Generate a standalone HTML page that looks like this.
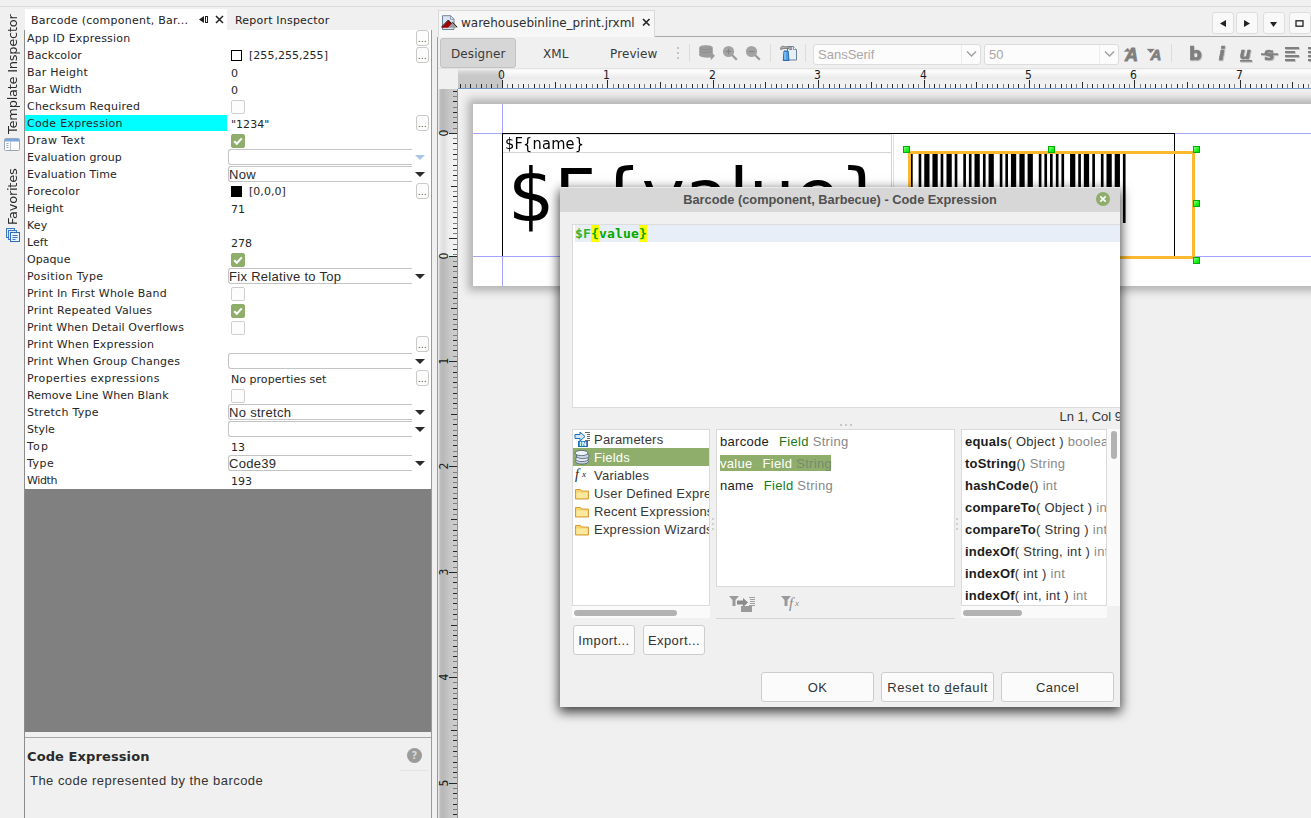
<!DOCTYPE html>
<html lang="en"><head><meta charset="utf-8"><title>Barcode (component, Barbecue) - Code Expression</title>
<style>
*{box-sizing:border-box;margin:0;padding:0}
html,body{width:1311px;height:818px;overflow:hidden;background:#f0f0f0}
body{position:relative;font-family:"DejaVu Sans","Liberation Sans",sans-serif;font-size:11px;color:#222}
.a{position:absolute}
.t{position:absolute;white-space:nowrap;line-height:1}
.u{font-family:"Liberation Sans",sans-serif}
.vt{position:absolute;writing-mode:vertical-rl;transform:rotate(180deg);white-space:nowrap;font-size:13px;line-height:1;color:#2a2a2a}
.lbl{position:absolute;left:27px;font-size:11px;letter-spacing:.2px;line-height:17px;height:17px;white-space:nowrap;color:#262626}
.val{position:absolute;left:231px;font-size:11px;letter-spacing:.03px;line-height:17px;height:17px;white-space:nowrap;color:#262626}
.dots{position:absolute;left:416px;width:13px;height:16px;border:1px solid #c9c9c9;border-radius:3px;background:#fcfcfc;font-size:8px;line-height:17px;text-align:center;color:#333;letter-spacing:.4px;overflow:hidden}
.cb{position:absolute;left:231px;width:14px;height:14px;border:1px solid #cfcfcf;border-radius:2px;background:#fdfdfd}
.cb.on{background:#8fae6c;border-color:#8fae6c}
.combo{position:absolute;left:228px;width:184px;height:16px;border:1px solid #c4c4c4;border-right:none;border-radius:3px 0 0 3px;background:#fff;font-family:"Liberation Sans",sans-serif;font-size:13px;letter-spacing:.3px;line-height:15px;padding-left:0;color:#2a2a2a;white-space:nowrap}
.arr{position:absolute;left:415px;width:0;height:0;border-left:5px solid transparent;border-right:5px solid transparent;border-top:5px solid #2b2b2b}
.sw{position:absolute;left:231px;width:11px;height:11px;border:1px solid #000}
.btn{position:absolute;border:1px solid #cdcdcd;border-radius:3px;background:#fbfbfb;font-family:"Liberation Sans",sans-serif;font-size:13px;letter-spacing:.4px;color:#333;text-align:center;white-space:nowrap}
.row{position:absolute;white-space:nowrap;font-family:"Liberation Sans",sans-serif;font-size:13px;letter-spacing:.3px;line-height:18px;color:#383838}
</style></head><body>
<div class="a" style="left:0;top:6px;width:1311px;height:1px;background:#dadada"></div>
<div class="vt" style="left:6px;top:14px;height:120px;letter-spacing:-.25px">Template Inspector</div>
<svg class="a" style="left:4px;top:138px" width="16" height="13" viewBox="0 0 16 13"><rect x=".5" y=".5" width="15" height="12" rx="1" fill="#fdfdfd" stroke="#9aa7b8"/><rect x="1" y="1" width="14" height="2.5" fill="#7aa7de"/><line x1="6.5" y1="3.5" x2="6.5" y2="12" stroke="#b8c0cc"/><path d="M2.5 5.5h2M2.5 7.5h2M2.5 9.5h2" stroke="#9aa" stroke-width="1"/></svg>
<div class="vt" style="left:6px;top:168px;height:57px;letter-spacing:-.25px">Favorites</div>
<svg class="a" style="left:6px;top:228px" width="14" height="14" viewBox="0 0 14 14"><rect x=".5" y=".5" width="8" height="9" fill="#dbe8f8" stroke="#3d79c4"/><rect x="2.5" y="2.5" width="8" height="9" fill="#dbe8f8" stroke="#3d79c4"/><rect x="4.5" y="4.5" width="9" height="9" fill="#eaf2fc" stroke="#2f6cbc"/><path d="M6.5 7.5h5M6.5 9.5h5M6.5 11.5h3" stroke="#3d79c4"/></svg>
<div class="a" style="left:25px;top:9px;width:202px;height:21px;background:#fff"></div>
<div class="t" style="left:31px;top:15px;font-size:11px;letter-spacing:.26px;color:#222">Barcode (component, Bar...</div>
<svg class="a" style="left:198px;top:14px" width="12" height="11" viewBox="0 0 12 11"><path d="M1 5.5L6 2v7z" fill="#222"/><rect x="7.5" y="2.5" width="2" height="6" fill="none" stroke="#222"/></svg>
<svg class="a" style="left:215px;top:15px" width="9" height="9" viewBox="0 0 9 9"><path d="M1 1l7 7M8 1l-7 7" stroke="#222" stroke-width="1.5"/></svg>
<div class="t" style="left:235px;top:15px;font-size:11px;letter-spacing:.2px;color:#222">Report Inspector</div>
<div class="a" style="left:25px;top:30px;width:406px;height:459px;background:#fff"></div>
<div class="a" style="left:25px;top:489px;width:406px;height:243px;background:#808080"></div>
<div class="a" style="left:24px;top:30px;width:1px;height:788px;background:#8c8c8c"></div>
<div class="a" style="left:431px;top:30px;width:1px;height:788px;background:#9a9a9a"></div>
<div class="a" style="left:25px;top:737px;width:406px;height:1px;background:#a6a6a6"></div>
<div class="lbl" style="top:30px;letter-spacing:0.206px">App ID Expression</div>
<div class="dots" style="top:30px">...</div>
<div class="lbl" style="top:47px;letter-spacing:0.12px">Backcolor</div>
<div class="dots" style="top:47px">...</div>
<div class="sw" style="top:50px;background:#fff"></div>
<div class="val" style="left:249px;top:47px">[255,255,255]</div>
<div class="lbl" style="top:64px;letter-spacing:0.239px">Bar Height</div>
<div class="val" style="top:65px">0</div>
<div class="lbl" style="top:81px;letter-spacing:0.051px">Bar Width</div>
<div class="val" style="top:82px">0</div>
<div class="lbl" style="top:98px;letter-spacing:0.197px">Checksum Required</div>
<div class="cb" style="top:100px"></div>
<div class="a" style="left:25px;top:115px;width:202px;height:16px;background:#00ffff"></div>
<div class="lbl" style="top:115px;letter-spacing:0.297px">Code Expression</div>
<div class="dots" style="top:115px">...</div>
<div class="val" style="top:116px">&quot;1234&quot;</div>
<div class="lbl" style="top:132px;letter-spacing:0.412px">Draw Text</div>
<div class="cb on" style="top:134px"><svg width="12" height="12" viewBox="0 0 12 12" style="display:block"><path d="M2.2 6.2l2.6 2.6 5-5.4" fill="none" stroke="#fff" stroke-width="2.1"/></svg></div>
<div class="lbl" style="top:149px;letter-spacing:0.083px">Evaluation group</div>
<div class="combo" style="top:149px"></div>
<div class="arr" style="top:155px;border-top-color:#a9c6ea"></div>
<div class="lbl" style="top:166px;letter-spacing:0.095px">Evaluation Time</div>
<div class="combo" style="top:166px">Now</div>
<div class="arr" style="top:172px;border-top-color:#2b2b2b"></div>
<div class="lbl" style="top:183px;letter-spacing:0.252px">Forecolor</div>
<div class="dots" style="top:183px">...</div>
<div class="sw" style="top:186px;background:#000"></div>
<div class="val" style="left:249px;top:183px">[0,0,0]</div>
<div class="lbl" style="top:200px;letter-spacing:0.032px">Height</div>
<div class="val" style="top:201px">71</div>
<div class="lbl" style="top:217px;letter-spacing:0.17px">Key</div>
<div class="lbl" style="top:234px;letter-spacing:0.083px">Left</div>
<div class="val" style="top:235px">278</div>
<div class="lbl" style="top:251px;letter-spacing:0.058px">Opaque</div>
<div class="cb on" style="top:253px"><svg width="12" height="12" viewBox="0 0 12 12" style="display:block"><path d="M2.2 6.2l2.6 2.6 5-5.4" fill="none" stroke="#fff" stroke-width="2.1"/></svg></div>
<div class="lbl" style="top:268px;letter-spacing:0.371px">Position Type</div>
<div class="combo" style="top:268px">Fix Relative to Top</div>
<div class="arr" style="top:274px;border-top-color:#2b2b2b"></div>
<div class="lbl" style="top:285px;letter-spacing:0.181px">Print In First Whole Band</div>
<div class="cb" style="top:287px"></div>
<div class="lbl" style="top:302px;letter-spacing:0.217px">Print Repeated Values</div>
<div class="cb on" style="top:304px"><svg width="12" height="12" viewBox="0 0 12 12" style="display:block"><path d="M2.2 6.2l2.6 2.6 5-5.4" fill="none" stroke="#fff" stroke-width="2.1"/></svg></div>
<div class="lbl" style="top:319px;letter-spacing:0.086px">Print When Detail Overflows</div>
<div class="cb" style="top:321px"></div>
<div class="lbl" style="top:336px;letter-spacing:0.17px">Print When Expression</div>
<div class="dots" style="top:336px">...</div>
<div class="lbl" style="top:353px;letter-spacing:0.183px">Print When Group Changes</div>
<div class="combo" style="top:353px"></div>
<div class="arr" style="top:359px;border-top-color:#2b2b2b"></div>
<div class="lbl" style="top:370px;letter-spacing:0.393px">Properties expressions</div>
<div class="dots" style="top:370px">...</div>
<div class="val" style="top:371px">No properties set</div>
<div class="lbl" style="top:387px;letter-spacing:0.057px">Remove Line When Blank</div>
<div class="cb" style="top:389px"></div>
<div class="lbl" style="top:404px;letter-spacing:0.288px">Stretch Type</div>
<div class="combo" style="top:404px">No stretch</div>
<div class="arr" style="top:410px;border-top-color:#2b2b2b"></div>
<div class="lbl" style="top:421px;letter-spacing:0.053px">Style</div>
<div class="combo" style="top:421px"></div>
<div class="arr" style="top:427px;border-top-color:#2b2b2b"></div>
<div class="lbl" style="top:438px;letter-spacing:1.17px">Top</div>
<div class="val" style="top:439px">13</div>
<div class="lbl" style="top:455px;letter-spacing:0.521px">Type</div>
<div class="combo" style="top:455px">Code39</div>
<div class="arr" style="top:461px;border-top-color:#2b2b2b"></div>
<div class="lbl" style="top:472px;letter-spacing:-0.396px">Width</div>
<div class="val" style="top:473px">193</div>
<div class="t" style="left:27px;top:750px;font-size:13px;font-weight:bold;letter-spacing:.1px;color:#2a2a2a">Code Expression</div>
<div class="t u" style="left:30px;top:774px;font-size:13px;letter-spacing:.47px;color:#333">The code represented by the barcode</div>
<div class="a" style="left:407px;top:748px;width:15px;height:15px;border-radius:50%;background:#9b9b9b;color:#d8d8d8;font-size:10px;font-weight:bold;line-height:15px;text-align:center">?</div>
<div class="a" style="left:400px;top:770px;width:29px;height:1px;background:#e4e4e4"></div>
<div class="a" style="left:437px;top:37px;width:1px;height:781px;background:#9a9a9a"></div>
<div class="a" style="left:655px;top:36px;width:656px;height:1px;background:#a8a8a8"></div>
<div class="a" style="left:438px;top:10px;width:217px;height:27px;background:#f7f7f7;border:1px solid #d9d9d9;border-bottom:none"></div>
<svg class="a" style="left:441px;top:15px" width="17" height="16" viewBox="0 0 17 16"><path d="M1.500 .700h8l3.500 3.500v10.300h-11.500z" fill="#d9e4f2" stroke="#73859b"/><path d="M9.500 .700v3.500h3.500z" fill="#f4f8fd" stroke="#73859b" stroke-width=".8"/><path d="M7 12.700L11.600 7.600 16 12.300 15.600 12.700z" fill="#9a9a9a"/><path d="M.400 12.700L7.300 5.300 10.600 8.800 7 12.700z" fill="#a30000"/><path d="M.300 12.300L7.300 5 10.400 8.400 11.600 7.300 16.200 12.200" fill="none" stroke="#161616" stroke-width="1"/></svg>
<div class="t" style="left:461px;top:17px;font-size:12px;color:#2e2e2e">warehousebinline_print.jrxml</div>
<svg class="a" style="left:642px;top:18px" width="9" height="9" viewBox="0 0 9 9"><path d="M1 1l6.5 6.5M7.5 1L1 7.5" stroke="#222" stroke-width="1.6"/></svg>
<div class="a" style="left:1212px;top:12px;width:22px;height:22px;border:1px solid #dedede;border-radius:3px;background:#f9f9f9"></div>
<div class="a" style="left:1236px;top:12px;width:22px;height:22px;border:1px solid #dedede;border-radius:3px;background:#f9f9f9"></div>
<div class="a" style="left:1263px;top:12px;width:22px;height:22px;border:1px solid #dedede;border-radius:3px;background:#f9f9f9"></div>
<div class="a" style="left:1289px;top:12px;width:22px;height:22px;border:1px solid #dedede;border-radius:3px;background:#f9f9f9"></div>
<svg class="a" style="left:1213px;top:13px" width="98" height="21" viewBox="0 0 98 21"><path d="M13 7v7l-6-3.500z" fill="#222"/><path d="M31 7v7l6-3.500z" fill="#222"/><path d="M57 9h7l-3.500 5z" fill="#222"/><rect x="83" y="7.800" width="7" height="5.400" fill="none" stroke="#222" stroke-width="1.300"/></svg>
<div class="a" style="left:440px;top:38px;width:76px;height:30px;border:1px solid #c3c3c3;border-radius:3px;background:#d6d6d6"></div>
<div class="t" style="left:451px;top:48px;font-size:12px;letter-spacing:.1px;color:#3a3a3a">Designer</div>
<div class="t" style="left:543px;top:48px;font-size:12px;letter-spacing:.1px;color:#3a3a3a">XML</div>
<div class="t" style="left:610px;top:48px;font-size:12px;letter-spacing:.1px;color:#3a3a3a">Preview</div>
<div class="a" style="left:677px;top:47px;width:2px;height:12px;background:repeating-linear-gradient(#c4c4c4 0 2px,transparent 2px 5px)"></div>
<div class="a" style="left:689px;top:44px;width:1px;height:18px;background:#dcdcdc"></div>
<div class="a" style="left:770px;top:44px;width:1px;height:18px;background:#dcdcdc"></div>
<div class="a" style="left:805px;top:44px;width:1px;height:18px;background:#dcdcdc"></div>
<div class="a" style="left:1171px;top:44px;width:1px;height:18px;background:#dcdcdc"></div>
<svg class="a" style="left:698px;top:44px" width="18" height="17" viewBox="0 0 18 17"><g fill="#9c9c9c"><path d="M1.200 3.600C1.200 .300 14.800 .300 14.800 3.600V11C14.800 14.300 1.200 14.300 1.200 11z"/><path d="M8.500 10.500h4.300V8l4.200 3.800-4.200 4.400v-2.700H8.500z"/></g><path d="M2 4.500c2 1.600 10 1.600 12 0M2 7.300c2 1.600 10 1.600 12 0" fill="none" stroke="#8b8b8b" stroke-width=".9"/></svg>
<svg class="a" style="left:722px;top:45px" width="16" height="16" viewBox="0 0 16 16"><path d="M10 10l4.800 4.800" stroke="#999" stroke-width="2.200"/><circle cx="6.500" cy="6.500" r="5.600" fill="#a3a3a3"/><path d="M3.700 6.500h5.600M6.500 3.700v5.600" stroke="#868686" stroke-width="1.200"/></svg>
<svg class="a" style="left:745px;top:45px" width="16" height="16" viewBox="0 0 16 16"><path d="M10 10l4.800 4.800" stroke="#999" stroke-width="2.200"/><circle cx="6.500" cy="6.500" r="5.600" fill="#a3a3a3"/><path d="M3.700 6.500h5.600" stroke="#868686" stroke-width="1.200"/></svg>
<svg class="a" style="left:780px;top:45px" width="17" height="17" viewBox="0 0 17 17"><path d="M7.500 1.500h6l3 3v10.500h-9z" fill="#e6eef7" stroke="#6f8196"/><path d="M13.500 1.500v3h3" fill="#f8fbff" stroke="#6f8196" stroke-width=".8"/><path d="M.700 2.500c1-1.500 3-1.500 4-.700h5.500c1 0 1.500 1.200 1.500 2.700h-2l-.700-1H5.500c-2 0-3 .200-4.800 1z" fill="#b4b4b4" stroke="#6a6a6a" stroke-width=".8"/><path d="M4 6h4.200l.800 9.500H3.200z" fill="#4fa0e2" stroke="#235f9f" stroke-width=".9"/><path d="M5 7v7.500" stroke="#a8d4f8" stroke-width="1"/></svg>
<div class="a" style="left:813px;top:44px;width:168px;height:21px;border:1px solid #dcdcdc;border-radius:3px;background:#fcfcfc"></div>
<div class="a" style="left:961px;top:45px;width:1px;height:19px;background:#ececec"></div>
<div class="t u" style="left:818px;top:48px;font-size:13px;letter-spacing:0;color:#aca6a6">SansSerif</div>
<div class="a" style="left:984px;top:44px;width:135px;height:21px;border:1px solid #dcdcdc;border-radius:3px;background:#fcfcfc"></div>
<div class="a" style="left:1099px;top:45px;width:1px;height:19px;background:#ececec"></div>
<div class="t u" style="left:989px;top:48px;font-size:13px;letter-spacing:0;color:#aca6a6">50</div>
<svg class="a" style="left:966px;top:50px" width="11" height="8" viewBox="0 0 11 8"><path d="M1 1.500l4.500 4.500 4.500-4.500" fill="none" stroke="#a0a0a0" stroke-width="1.500"/></svg>
<svg class="a" style="left:1104px;top:50px" width="11" height="8" viewBox="0 0 11 8"><path d="M1 1.500l4.500 4.500 4.500-4.500" fill="none" stroke="#a0a0a0" stroke-width="1.500"/></svg>
<svg class="a" style="left:1122px;top:44px;overflow:visible" width="189" height="20" viewBox="0 0 189 20"><defs><filter id="ds" x="-20%" y="-20%" width="150%" height="150%"><feDropShadow dx=".6" dy=".8" stdDeviation=".5" flood-color="#000" flood-opacity=".3"/></filter></defs><g fill="#7f7f7f" stroke="#7f7f7f" stroke-linejoin="round" font-family="Liberation Sans, sans-serif" font-weight="bold" font-style="italic"><text x="3" y="16.800" font-size="18" stroke-width=".9">A</text><path d="M2 7.500l3.800-3.500 2.400 3.500z" stroke-width=".3"/><text x="28.500" y="16" font-size="15" stroke-width=".8">A</text><path d="M25 5h7.500l-3.800 4z" stroke-width=".3"/></g><g fill="#7f7f7f" stroke="#7f7f7f" font-family="DejaVu Sans, sans-serif" font-weight="bold" filter="url(#ds)"><text x="67" y="16" font-size="18" stroke-width=".7">b</text><text x="96.500" y="16" font-size="18" font-style="italic" stroke-width=".6">i</text><text x="117.500" y="14.500" font-size="16" font-style="italic" stroke-width=".5">u</text><rect x="118" y="16" width="12" height="1.600" stroke="none"/><text x="142" y="16.200" font-size="17" stroke-width=".5">s</text><rect x="139" y="9.300" width="17" height="1.800" stroke="none"/><path d="M163 3h14v2h-14zM163 7h10v2h-10zM163 11h14v2h-14zM163 15h10v2h-10zM186 3h3v2h-3zM186 7h3v2h-3zM186 11h3v2h-3zM186 15h3v2h-3z" stroke="none"/></g></svg>
<div class="a" style="left:438px;top:68px;width:873px;height:1px;background:#e2e2e2"></div>
<div class="a" style="left:458px;top:69px;width:853px;height:19px;background:linear-gradient(#f4f4f4,#fcfcfc 12%,#ececec 45%,#f1f1f1 80%,#f4f4f4)"></div>
<div class="a" style="left:458px;top:69px;width:44px;height:19px;background:linear-gradient(#eeeeee,#d6d6d6 15%,#c8c8c8 35%,#c6c6c6)"></div>
<div class="a" style="left:458px;top:88px;width:853px;height:1px;background:#7299c6"></div>
<svg class="a" style="left:458px;top:69px" width="853" height="19" viewBox="0 0 853 19" shape-rendering="crispEdges"><g fill="#262626"><rect x="2" y="15" width="1" height="4"/><rect x="12" y="15" width="1" height="4"/><rect x="23" y="15" width="1" height="4"/><rect x="33" y="15" width="1" height="4"/><rect x="44" y="11" width="1" height="8"/><rect x="54" y="15" width="1" height="4"/><rect x="65" y="15" width="1" height="4"/><rect x="76" y="15" width="1" height="4"/><rect x="86" y="15" width="1" height="4"/><rect x="97" y="13" width="1" height="6"/><rect x="107" y="15" width="1" height="4"/><rect x="118" y="15" width="1" height="4"/><rect x="128" y="15" width="1" height="4"/><rect x="139" y="15" width="1" height="4"/><rect x="149" y="11" width="1" height="8"/><rect x="160" y="15" width="1" height="4"/><rect x="170" y="15" width="1" height="4"/><rect x="181" y="15" width="1" height="4"/><rect x="192" y="15" width="1" height="4"/><rect x="202" y="13" width="1" height="6"/><rect x="213" y="15" width="1" height="4"/><rect x="223" y="15" width="1" height="4"/><rect x="234" y="15" width="1" height="4"/><rect x="244" y="15" width="1" height="4"/><rect x="255" y="11" width="1" height="8"/><rect x="265" y="15" width="1" height="4"/><rect x="276" y="15" width="1" height="4"/><rect x="286" y="15" width="1" height="4"/><rect x="297" y="15" width="1" height="4"/><rect x="307" y="13" width="1" height="6"/><rect x="318" y="15" width="1" height="4"/><rect x="329" y="15" width="1" height="4"/><rect x="339" y="15" width="1" height="4"/><rect x="350" y="15" width="1" height="4"/><rect x="360" y="11" width="1" height="8"/><rect x="371" y="15" width="1" height="4"/><rect x="381" y="15" width="1" height="4"/><rect x="392" y="15" width="1" height="4"/><rect x="402" y="15" width="1" height="4"/><rect x="413" y="13" width="1" height="6"/><rect x="423" y="15" width="1" height="4"/><rect x="434" y="15" width="1" height="4"/><rect x="444" y="15" width="1" height="4"/><rect x="455" y="15" width="1" height="4"/><rect x="466" y="11" width="1" height="8"/><rect x="476" y="15" width="1" height="4"/><rect x="487" y="15" width="1" height="4"/><rect x="497" y="15" width="1" height="4"/><rect x="508" y="15" width="1" height="4"/><rect x="518" y="13" width="1" height="6"/><rect x="529" y="15" width="1" height="4"/><rect x="539" y="15" width="1" height="4"/><rect x="550" y="15" width="1" height="4"/><rect x="560" y="15" width="1" height="4"/><rect x="571" y="11" width="1" height="8"/><rect x="581" y="15" width="1" height="4"/><rect x="592" y="15" width="1" height="4"/><rect x="603" y="15" width="1" height="4"/><rect x="613" y="15" width="1" height="4"/><rect x="624" y="13" width="1" height="6"/><rect x="634" y="15" width="1" height="4"/><rect x="645" y="15" width="1" height="4"/><rect x="655" y="15" width="1" height="4"/><rect x="666" y="15" width="1" height="4"/><rect x="676" y="11" width="1" height="8"/><rect x="687" y="15" width="1" height="4"/><rect x="697" y="15" width="1" height="4"/><rect x="708" y="15" width="1" height="4"/><rect x="719" y="15" width="1" height="4"/><rect x="729" y="13" width="1" height="6"/><rect x="740" y="15" width="1" height="4"/><rect x="750" y="15" width="1" height="4"/><rect x="761" y="15" width="1" height="4"/><rect x="771" y="15" width="1" height="4"/><rect x="782" y="11" width="1" height="8"/><rect x="792" y="15" width="1" height="4"/><rect x="803" y="15" width="1" height="4"/><rect x="813" y="15" width="1" height="4"/><rect x="824" y="15" width="1" height="4"/><rect x="834" y="13" width="1" height="6"/><rect x="845" y="15" width="1" height="4"/></g><g fill="#7c7c7c"><rect x="7" y="15" width="1" height="4"/><rect x="18" y="15" width="1" height="4"/><rect x="28" y="15" width="1" height="4"/><rect x="39" y="15" width="1" height="4"/><rect x="49" y="15" width="1" height="4"/><rect x="60" y="15" width="1" height="4"/><rect x="70" y="15" width="1" height="4"/><rect x="81" y="15" width="1" height="4"/><rect x="91" y="15" width="1" height="4"/><rect x="102" y="15" width="1" height="4"/><rect x="112" y="15" width="1" height="4"/><rect x="123" y="15" width="1" height="4"/><rect x="134" y="15" width="1" height="4"/><rect x="144" y="15" width="1" height="4"/><rect x="155" y="15" width="1" height="4"/><rect x="165" y="15" width="1" height="4"/><rect x="176" y="15" width="1" height="4"/><rect x="186" y="15" width="1" height="4"/><rect x="197" y="15" width="1" height="4"/><rect x="207" y="15" width="1" height="4"/><rect x="218" y="15" width="1" height="4"/><rect x="228" y="15" width="1" height="4"/><rect x="239" y="15" width="1" height="4"/><rect x="249" y="15" width="1" height="4"/><rect x="260" y="15" width="1" height="4"/><rect x="271" y="15" width="1" height="4"/><rect x="281" y="15" width="1" height="4"/><rect x="292" y="15" width="1" height="4"/><rect x="302" y="15" width="1" height="4"/><rect x="313" y="15" width="1" height="4"/><rect x="323" y="15" width="1" height="4"/><rect x="334" y="15" width="1" height="4"/><rect x="344" y="15" width="1" height="4"/><rect x="355" y="15" width="1" height="4"/><rect x="365" y="15" width="1" height="4"/><rect x="376" y="15" width="1" height="4"/><rect x="387" y="15" width="1" height="4"/><rect x="397" y="15" width="1" height="4"/><rect x="408" y="15" width="1" height="4"/><rect x="418" y="15" width="1" height="4"/><rect x="429" y="15" width="1" height="4"/><rect x="439" y="15" width="1" height="4"/><rect x="450" y="15" width="1" height="4"/><rect x="460" y="15" width="1" height="4"/><rect x="471" y="15" width="1" height="4"/><rect x="481" y="15" width="1" height="4"/><rect x="492" y="15" width="1" height="4"/><rect x="502" y="15" width="1" height="4"/><rect x="513" y="15" width="1" height="4"/><rect x="524" y="15" width="1" height="4"/><rect x="534" y="15" width="1" height="4"/><rect x="545" y="15" width="1" height="4"/><rect x="555" y="15" width="1" height="4"/><rect x="566" y="15" width="1" height="4"/><rect x="576" y="15" width="1" height="4"/><rect x="587" y="15" width="1" height="4"/><rect x="597" y="15" width="1" height="4"/><rect x="608" y="15" width="1" height="4"/><rect x="618" y="15" width="1" height="4"/><rect x="629" y="15" width="1" height="4"/><rect x="639" y="15" width="1" height="4"/><rect x="650" y="15" width="1" height="4"/><rect x="661" y="15" width="1" height="4"/><rect x="671" y="15" width="1" height="4"/><rect x="682" y="15" width="1" height="4"/><rect x="692" y="15" width="1" height="4"/><rect x="703" y="15" width="1" height="4"/><rect x="713" y="15" width="1" height="4"/><rect x="724" y="15" width="1" height="4"/><rect x="734" y="15" width="1" height="4"/><rect x="745" y="15" width="1" height="4"/><rect x="755" y="15" width="1" height="4"/><rect x="766" y="15" width="1" height="4"/><rect x="776" y="15" width="1" height="4"/><rect x="787" y="15" width="1" height="4"/><rect x="798" y="15" width="1" height="4"/><rect x="808" y="15" width="1" height="4"/><rect x="819" y="15" width="1" height="4"/><rect x="829" y="15" width="1" height="4"/><rect x="840" y="15" width="1" height="4"/><rect x="850" y="15" width="1" height="4"/></g><g fill="#1a1a1a" font-family="DejaVu Sans Condensed, DejaVu Sans, sans-serif" font-size="12" shape-rendering="auto"><text x="43.5" y="10" text-anchor="middle">0</text><text x="148.5" y="10" text-anchor="middle">1</text><text x="254.5" y="10" text-anchor="middle">2</text><text x="359.5" y="10" text-anchor="middle">3</text><text x="465.5" y="10" text-anchor="middle">4</text><text x="570.5" y="10" text-anchor="middle">5</text><text x="675.5" y="10" text-anchor="middle">6</text><text x="781.5" y="10" text-anchor="middle">7</text></g></svg>
<div class="a" style="left:438px;top:89px;width:19px;height:729px;background:linear-gradient(90deg,#f0f0f0 0,#bebebe 12%,#b8b8b8 25%,#c6c6c6 60%,#cecece 100%)"></div>
<div class="a" style="left:438px;top:133px;width:19px;height:124px;background:linear-gradient(90deg,#fafafa,#e8e8e8 12%,#dedede 30%,#ededed 55%,#f4f4f4)"></div>
<div class="a" style="left:457px;top:89px;width:1px;height:729px;background:#7299c6"></div>
<svg class="a" style="left:438px;top:89px" width="19" height="729" viewBox="0 0 19 729" shape-rendering="crispEdges"><g fill="#262626"><rect x="15" y="2" width="4" height="1"/><rect x="15" y="12" width="4" height="1"/><rect x="15" y="23" width="4" height="1"/><rect x="15" y="33" width="4" height="1"/><rect x="11" y="44" width="8" height="1"/><rect x="15" y="54" width="4" height="1"/><rect x="15" y="65" width="4" height="1"/><rect x="15" y="76" width="4" height="1"/><rect x="15" y="86" width="4" height="1"/><rect x="13" y="97" width="6" height="1"/><rect x="15" y="107" width="4" height="1"/><rect x="15" y="118" width="4" height="1"/><rect x="15" y="128" width="4" height="1"/><rect x="15" y="139" width="4" height="1"/><rect x="11" y="149" width="8" height="1"/><rect x="15" y="160" width="4" height="1"/><rect x="11" y="167" width="8" height="1"/><rect x="15" y="177" width="4" height="1"/><rect x="15" y="188" width="4" height="1"/><rect x="15" y="198" width="4" height="1"/><rect x="15" y="209" width="4" height="1"/><rect x="13" y="219" width="6" height="1"/><rect x="15" y="230" width="4" height="1"/><rect x="15" y="240" width="4" height="1"/><rect x="15" y="251" width="4" height="1"/><rect x="15" y="261" width="4" height="1"/><rect x="11" y="272" width="8" height="1"/><rect x="15" y="283" width="4" height="1"/><rect x="15" y="293" width="4" height="1"/><rect x="15" y="304" width="4" height="1"/><rect x="15" y="314" width="4" height="1"/><rect x="13" y="325" width="6" height="1"/><rect x="15" y="335" width="4" height="1"/><rect x="15" y="346" width="4" height="1"/><rect x="15" y="356" width="4" height="1"/><rect x="15" y="367" width="4" height="1"/><rect x="11" y="377" width="8" height="1"/><rect x="15" y="388" width="4" height="1"/><rect x="15" y="398" width="4" height="1"/><rect x="15" y="409" width="4" height="1"/><rect x="15" y="420" width="4" height="1"/><rect x="13" y="430" width="6" height="1"/><rect x="15" y="441" width="4" height="1"/><rect x="15" y="451" width="4" height="1"/><rect x="15" y="462" width="4" height="1"/><rect x="15" y="472" width="4" height="1"/><rect x="11" y="483" width="8" height="1"/><rect x="15" y="493" width="4" height="1"/><rect x="15" y="504" width="4" height="1"/><rect x="15" y="514" width="4" height="1"/><rect x="15" y="525" width="4" height="1"/><rect x="13" y="536" width="6" height="1"/><rect x="15" y="546" width="4" height="1"/><rect x="15" y="557" width="4" height="1"/><rect x="15" y="567" width="4" height="1"/><rect x="15" y="578" width="4" height="1"/><rect x="11" y="588" width="8" height="1"/><rect x="15" y="599" width="4" height="1"/><rect x="15" y="609" width="4" height="1"/><rect x="15" y="620" width="4" height="1"/><rect x="15" y="630" width="4" height="1"/><rect x="13" y="641" width="6" height="1"/><rect x="15" y="651" width="4" height="1"/><rect x="15" y="662" width="4" height="1"/><rect x="15" y="673" width="4" height="1"/><rect x="15" y="683" width="4" height="1"/><rect x="11" y="694" width="8" height="1"/><rect x="15" y="704" width="4" height="1"/><rect x="15" y="715" width="4" height="1"/><rect x="15" y="725" width="4" height="1"/></g><g fill="#7c7c7c"><rect x="15" y="7" width="4" height="1"/><rect x="15" y="18" width="4" height="1"/><rect x="15" y="28" width="4" height="1"/><rect x="15" y="39" width="4" height="1"/><rect x="15" y="49" width="4" height="1"/><rect x="15" y="60" width="4" height="1"/><rect x="15" y="70" width="4" height="1"/><rect x="15" y="81" width="4" height="1"/><rect x="15" y="91" width="4" height="1"/><rect x="15" y="102" width="4" height="1"/><rect x="15" y="112" width="4" height="1"/><rect x="15" y="123" width="4" height="1"/><rect x="15" y="134" width="4" height="1"/><rect x="15" y="144" width="4" height="1"/><rect x="15" y="155" width="4" height="1"/><rect x="15" y="165" width="4" height="1"/><rect x="15" y="172" width="4" height="1"/><rect x="15" y="182" width="4" height="1"/><rect x="15" y="193" width="4" height="1"/><rect x="15" y="203" width="4" height="1"/><rect x="15" y="214" width="4" height="1"/><rect x="15" y="225" width="4" height="1"/><rect x="15" y="235" width="4" height="1"/><rect x="15" y="246" width="4" height="1"/><rect x="15" y="256" width="4" height="1"/><rect x="15" y="267" width="4" height="1"/><rect x="15" y="277" width="4" height="1"/><rect x="15" y="288" width="4" height="1"/><rect x="15" y="298" width="4" height="1"/><rect x="15" y="309" width="4" height="1"/><rect x="15" y="319" width="4" height="1"/><rect x="15" y="330" width="4" height="1"/><rect x="15" y="341" width="4" height="1"/><rect x="15" y="351" width="4" height="1"/><rect x="15" y="362" width="4" height="1"/><rect x="15" y="372" width="4" height="1"/><rect x="15" y="383" width="4" height="1"/><rect x="15" y="393" width="4" height="1"/><rect x="15" y="404" width="4" height="1"/><rect x="15" y="414" width="4" height="1"/><rect x="15" y="425" width="4" height="1"/><rect x="15" y="435" width="4" height="1"/><rect x="15" y="446" width="4" height="1"/><rect x="15" y="456" width="4" height="1"/><rect x="15" y="467" width="4" height="1"/><rect x="15" y="478" width="4" height="1"/><rect x="15" y="488" width="4" height="1"/><rect x="15" y="499" width="4" height="1"/><rect x="15" y="509" width="4" height="1"/><rect x="15" y="520" width="4" height="1"/><rect x="15" y="530" width="4" height="1"/><rect x="15" y="541" width="4" height="1"/><rect x="15" y="551" width="4" height="1"/><rect x="15" y="562" width="4" height="1"/><rect x="15" y="572" width="4" height="1"/><rect x="15" y="583" width="4" height="1"/><rect x="15" y="593" width="4" height="1"/><rect x="15" y="604" width="4" height="1"/><rect x="15" y="615" width="4" height="1"/><rect x="15" y="625" width="4" height="1"/><rect x="15" y="636" width="4" height="1"/><rect x="15" y="646" width="4" height="1"/><rect x="15" y="657" width="4" height="1"/><rect x="15" y="667" width="4" height="1"/><rect x="15" y="678" width="4" height="1"/><rect x="15" y="688" width="4" height="1"/><rect x="15" y="699" width="4" height="1"/><rect x="15" y="709" width="4" height="1"/><rect x="15" y="720" width="4" height="1"/></g><g fill="#1a1a1a" font-family="DejaVu Sans Condensed, DejaVu Sans, sans-serif" font-size="12" shape-rendering="auto"><text transform="translate(9.900,44.0) rotate(-90)" text-anchor="middle">0</text><text transform="translate(9.900,167.0) rotate(-90)" text-anchor="middle">0</text><text transform="translate(9.900,272.0) rotate(-90)" text-anchor="middle">1</text><text transform="translate(9.900,377.0) rotate(-90)" text-anchor="middle">2</text><text transform="translate(9.900,483.0) rotate(-90)" text-anchor="middle">3</text><text transform="translate(9.900,588.0) rotate(-90)" text-anchor="middle">4</text><text transform="translate(9.900,694.0) rotate(-90)" text-anchor="middle">5</text></g></svg>
<div class="a" style="left:458px;top:89px;width:853px;height:729px;overflow:hidden;background:#f0f0f0">
<div class="a" style="left:15px;top:15px;width:900px;height:182px;background:#fff;box-shadow:0 0 8px 5px rgba(0,0,0,.25)"></div>
<div class="a" style="left:44px;top:15px;width:1px;height:182px;background:#a3a3ff"></div>
<div class="a" style="left:15px;top:44px;width:900px;height:1px;background:#a3a3ff"></div>
<div class="a" style="left:44px;top:44px;width:673px;height:124px;border:1px solid #000"></div>
<div class="a" style="left:15px;top:167px;width:900px;height:1px;background:#a3a3ff"></div>
<div class="a" style="left:45px;top:45px;width:389px;height:19px;border-top:1px solid #e4e4e4;border-bottom:1px solid #d4d4d4;border-right:1px solid #d4d4d4"></div>
<div class="t" style="left:47px;top:45.700px;font-size:14.600px;color:#000;letter-spacing:.2px;line-height:17px;transform:scaleY(1.07);transform-origin:0 13.500px">$F{name}</div>
<div class="a" style="left:45px;top:64px;width:389px;height:104px;border-right:1px solid #d4d4d4"></div>
<div class="a" style="left:435px;top:45px;width:1px;height:123px;background:#e2e2e2"></div>
<div class="t" style="left:50px;top:69.500px;font-size:73px;color:#000;letter-spacing:-.4px">$F{value}</div>
<svg class="a" style="left:452.0px;top:63px" width="220" height="71" viewBox="0 0 220 71"><g fill="#000"><rect x="0.05" y="0" width="2.65" height="71"/><rect x="8.65" y="0" width="2.65" height="71"/><rect x="14.25" y="0" width="5.25" height="71"/><rect x="22.45" y="0" width="5.25" height="71"/><rect x="30.65" y="0" width="2.65" height="71"/><rect x="36.50" y="0" width="5.25" height="71"/><rect x="44.70" y="0" width="2.65" height="71"/><rect x="53.30" y="0" width="2.65" height="71"/><rect x="58.90" y="0" width="2.65" height="71"/><rect x="64.50" y="0" width="5.25" height="71"/><rect x="72.95" y="0" width="2.65" height="71"/><rect x="78.55" y="0" width="5.25" height="71"/><rect x="89.75" y="0" width="2.65" height="71"/><rect x="95.35" y="0" width="2.65" height="71"/><rect x="100.95" y="0" width="5.25" height="71"/><rect x="109.40" y="0" width="5.25" height="71"/><rect x="117.60" y="0" width="5.25" height="71"/><rect x="128.80" y="0" width="2.65" height="71"/><rect x="134.40" y="0" width="2.65" height="71"/><rect x="140.00" y="0" width="2.65" height="71"/><rect x="145.85" y="0" width="2.65" height="71"/><rect x="151.45" y="0" width="2.65" height="71"/><rect x="160.05" y="0" width="5.25" height="71"/><rect x="168.25" y="0" width="2.65" height="71"/><rect x="173.85" y="0" width="5.25" height="71"/><rect x="182.30" y="0" width="2.65" height="71"/><rect x="190.90" y="0" width="2.65" height="71"/><rect x="196.50" y="0" width="5.25" height="71"/><rect x="204.70" y="0" width="5.25" height="71"/><rect x="212.90" y="0" width="2.65" height="71"/></g></svg>
<div class="a" style="left:450px;top:62px;width:287px;height:108px;border:3px solid #fab92f"></div>
<div class="a" style="left:445px;top:57px;width:7px;height:7px;background:linear-gradient(135deg,#8aff8a,#1cf01c 60%,#00e400);border:1px solid #00ad00"></div>
<div class="a" style="left:590px;top:57px;width:7px;height:7px;background:linear-gradient(135deg,#8aff8a,#1cf01c 60%,#00e400);border:1px solid #00ad00"></div>
<div class="a" style="left:735px;top:57px;width:7px;height:7px;background:linear-gradient(135deg,#8aff8a,#1cf01c 60%,#00e400);border:1px solid #00ad00"></div>
<div class="a" style="left:735px;top:111px;width:7px;height:7px;background:linear-gradient(135deg,#8aff8a,#1cf01c 60%,#00e400);border:1px solid #00ad00"></div>
<div class="a" style="left:735px;top:168px;width:7px;height:7px;background:linear-gradient(135deg,#8aff8a,#1cf01c 60%,#00e400);border:1px solid #00ad00"></div>
</div>
<div class="a" style="left:560px;top:187px;width:560px;height:520px;background:#f0f0f0;box-shadow:0 4px 11px 1px rgba(0,0,0,.75)">
<div class="a" style="left:0;top:0;width:560px;height:25px;background:#d7d7d7;border-top:1px solid #e9e9e9"></div>
<div class="t u" style="left:0;top:6.500px;width:560px;text-align:center;font-size:12.800px;font-weight:bold;color:#505050">Barcode (component, Barbecue) - Code Expression</div>
<svg class="a" style="left:536px;top:5px" width="14" height="14" viewBox="0 0 14 14"><circle cx="7" cy="7" r="7" fill="#8fae6c"/><path d="M4.300 4.300l5.400 5.400M9.700 4.300l-5.400 5.400" stroke="#fff" stroke-width="1.700"/></svg>
<div class="a" style="left:12px;top:37px;width:548px;height:184px;background:#fff;border:1px solid #dcdcdc;border-right:none"></div>
<div class="a" style="left:15px;top:38px;width:545px;height:17px;background:#e8eef7"></div>
<div class="a" style="left:31px;top:38px;width:8px;height:17px;background:#ffff00"></div>
<div class="a" style="left:79px;top:38px;width:8px;height:17px;background:#ffff00"></div>
<div class="t" style="left:15px;top:39px;font-family:'DejaVu Sans Mono','Liberation Mono',monospace;font-size:13px;font-weight:bold;letter-spacing:.17px;color:#00a800;line-height:15px"><span style="color:#2fb52f">$F</span>{value}</div>
<div class="a" style="left:490px;top:220px;width:70px;height:20px;overflow:hidden"><div class="t u" style="left:9.500px;top:3px;font-size:13px;letter-spacing:-.05px;color:#383838">Ln 1, Col 9</div></div>
<div class="a" style="left:280px;top:237px;width:12px;height:2px;background:repeating-linear-gradient(90deg,#c8c8c8 0 2px,transparent 2px 5px)"></div>
<div class="a" style="left:12px;top:242px;width:138px;height:177px;background:#fff;border:1px solid #dadada;overflow:hidden">
<div class="a" style="left:1px;top:1px;width:16px;height:16px"><svg width="16" height="16" viewBox="0 0 16 16"><path d="M1 3.500h5V1l5 4.500L6 10V7.500H1z" fill="#cfe6fb" stroke="#1b6fb5"/><path d="M11 1.500h4.500M12.500 3.500h3M12.500 5.500h3M12.500 7.500h3M11 9.500h4.500" stroke="#6a6a6a" stroke-width="1" shape-rendering="crispEdges"/><rect x="4" y="10" width="10" height="6" fill="#1b6fb5"/><text x="9" y="15.300" font-size="6" font-weight="bold" fill="#fff" text-anchor="middle" font-family="DejaVu Sans, sans-serif">IN</text></svg></div>
<div class="row" style="left:21px;top:1px;letter-spacing:.22px;color:#383838">Parameters</div>
<div class="a" style="left:0;top:18px;width:138px;height:18px;background:#8fae6c"></div>
<div class="a" style="left:1px;top:19px;width:16px;height:16px"><svg width="16" height="16" viewBox="0 0 16 16"><g stroke="#4d5d73" stroke-width=".8"><ellipse cx="8" cy="12.500" rx="6.500" ry="2.600" fill="#c9d5e6"/><ellipse cx="8" cy="10" rx="6.500" ry="2.600" fill="#e4ebf5"/><ellipse cx="8.800" cy="7" rx="6.500" ry="2.600" fill="#c9d5e6"/><ellipse cx="7.500" cy="4" rx="6.500" ry="2.600" fill="#eef3fa"/></g></svg></div>
<div class="row" style="left:21px;top:19px;letter-spacing:.22px;color:#fff">Fields</div>
<div class="a" style="left:1px;top:37px;width:16px;height:16px"><svg width="16" height="16" viewBox="0 0 16 16"><text x="1" y="12" font-size="14" font-style="italic" font-family="Liberation Serif, serif" fill="#222">f</text><text x="8" y="10" font-size="9" font-style="italic" font-family="Liberation Serif, serif" fill="#222">x</text></svg></div>
<div class="row" style="left:21px;top:37px;letter-spacing:.22px;color:#383838">Variables</div>
<div class="a" style="left:1px;top:55px;width:16px;height:16px"><svg width="16" height="16" viewBox="0 0 16 16"><path d="M1.500 4.500h5l1 1.500h7v8h-13z" fill="#f6d66b" stroke="#d89a3a"/><path d="M2.500 7.500h11v5.500h-11z" fill="#fbe9a0"/></svg></div>
<div class="row" style="left:21px;top:55px;letter-spacing:.22px;color:#383838">User Defined Expressions</div>
<div class="a" style="left:1px;top:73px;width:16px;height:16px"><svg width="16" height="16" viewBox="0 0 16 16"><path d="M1.500 4.500h5l1 1.500h7v8h-13z" fill="#f6d66b" stroke="#d89a3a"/><path d="M2.500 7.500h11v5.500h-11z" fill="#fbe9a0"/></svg></div>
<div class="row" style="left:21px;top:73px;letter-spacing:.22px;color:#383838">Recent Expressions</div>
<div class="a" style="left:1px;top:91px;width:16px;height:16px"><svg width="16" height="16" viewBox="0 0 16 16"><path d="M1.500 4.500h5l1 1.500h7v8h-13z" fill="#f6d66b" stroke="#d89a3a"/><path d="M2.500 7.500h11v5.500h-11z" fill="#fbe9a0"/></svg></div>
<div class="row" style="left:21px;top:91px;letter-spacing:.22px;color:#383838">Expression Wizards</div>
</div>
<div class="a" style="left:12px;top:419px;width:138px;height:12px;background:#fafafa"></div>
<div class="a" style="left:14px;top:423px;width:103px;height:6px;border-radius:3px;background:#b2b2b2"></div>
<div class="a" style="left:152px;top:331px;width:2px;height:12px;background:repeating-linear-gradient(#cfcfcf 0 2px,transparent 2px 5px)"></div>
<div class="a" style="left:156px;top:242px;width:239px;height:158px;background:#fff;border:1px solid #dadada;overflow:hidden">
<div class="row" style="left:3px;top:3px;word-spacing:0"><span style="color:#222">barcode</span><span style="color:#1a7a1a;margin-left:10px">Field</span> <span style="color:#888">String</span></div>
<div class="a" style="left:3px;top:25px;width:111px;height:16px;background:#8fae6c"></div>
<div class="row" style="left:3px;top:25px;word-spacing:0"><span style="color:#fff">value</span><span style="color:#fff;margin-left:10px">Field</span> <span style="color:#7a8a6e">String</span></div>
<div class="row" style="left:3px;top:47px;word-spacing:0"><span style="color:#222">name</span><span style="color:#1a7a1a;margin-left:10px">Field</span> <span style="color:#888">String</span></div>
</div>
<svg class="a" style="left:169px;top:408px" width="28" height="17" viewBox="0 0 28 17"><path d="M0 1h10L6.500 5v6h-3V5z" fill="#9a9a9a"/><path d="M8 5.500h6V3l5 4.500-5 4.500V9.500H8z" fill="#8a8a8a"/><path d="M20 2.500h6M21 4.500h5M21 6.500h5M21 8.500h5M20 10.500h6" stroke="#a0a0a0" shape-rendering="crispEdges"/><rect x="12" y="11" width="11" height="6" fill="#9a9a9a"/></svg>
<svg class="a" style="left:221px;top:408px" width="22" height="17" viewBox="0 0 22 17"><path d="M0 1h10L6.500 5v6h-3V5z" fill="#9a9a9a"/><text x="8" y="13" font-size="15" font-style="italic" font-family="Liberation Serif, serif" fill="#8a8a8a">f</text><text x="14" y="11" font-size="9" font-style="italic" font-family="Liberation Serif, serif" fill="#8a8a8a">x</text></svg>
<div class="a" style="left:156px;top:431px;width:239px;height:1px;background:#d4d4d4"></div>
<div class="a" style="left:396px;top:331px;width:2px;height:12px;background:repeating-linear-gradient(#cfcfcf 0 2px,transparent 2px 5px)"></div>
<div class="a" style="left:401px;top:242px;width:146px;height:177px;background:#fff;border:1px solid #dadada;overflow:hidden">
<div class="row" style="left:3px;top:3px"><b style="color:#1c1c1c;letter-spacing:.2px">equals</b><span style="color:#333">( Object )</span> <span style="color:#888">boolean</span></div>
<div class="row" style="left:3px;top:25px"><b style="color:#1c1c1c;letter-spacing:.2px">toString</b><span style="color:#333">()</span> <span style="color:#888">String</span></div>
<div class="row" style="left:3px;top:47px"><b style="color:#1c1c1c;letter-spacing:.2px">hashCode</b><span style="color:#333">()</span> <span style="color:#888">int</span></div>
<div class="row" style="left:3px;top:69px"><b style="color:#1c1c1c;letter-spacing:.2px">compareTo</b><span style="color:#333">( Object )</span> <span style="color:#888">int</span></div>
<div class="row" style="left:3px;top:91px"><b style="color:#1c1c1c;letter-spacing:.2px">compareTo</b><span style="color:#333">( String )</span> <span style="color:#888">int</span></div>
<div class="row" style="left:3px;top:113px"><b style="color:#1c1c1c;letter-spacing:.2px">indexOf</b><span style="color:#333">( String, int )</span> <span style="color:#888">int</span></div>
<div class="row" style="left:3px;top:135px"><b style="color:#1c1c1c;letter-spacing:.2px">indexOf</b><span style="color:#333">( int )</span> <span style="color:#888">int</span></div>
<div class="row" style="left:3px;top:157px"><b style="color:#1c1c1c;letter-spacing:.2px">indexOf</b><span style="color:#333">( int, int )</span> <span style="color:#888">int</span></div>
</div>
<div class="a" style="left:547px;top:242px;width:13px;height:177px;background:#fafafa"></div>
<div class="a" style="left:551px;top:244px;width:6px;height:28px;border-radius:3px;background:#b2b2b2"></div>
<div class="a" style="left:401px;top:419px;width:146px;height:12px;background:#fafafa"></div>
<div class="a" style="left:403px;top:423px;width:59px;height:6px;border-radius:3px;background:#b2b2b2"></div>
<div class="btn" style="left:13px;top:438px;width:62px;height:30px;line-height:30px">Import...</div>
<div class="btn" style="left:83px;top:438px;width:62px;height:30px;line-height:30px">Export...</div>
<div class="btn" style="left:201px;top:485px;width:113px;height:30px;line-height:30px">OK</div>
<div class="btn" style="left:321px;top:485px;width:113px;height:30px;line-height:30px"><span style="letter-spacing:.6px">Reset to <span style="text-decoration:underline">d</span>efault</span></div>
<div class="btn" style="left:441px;top:485px;width:113px;height:30px;line-height:30px">Cancel</div>
</div>
</body></html>
